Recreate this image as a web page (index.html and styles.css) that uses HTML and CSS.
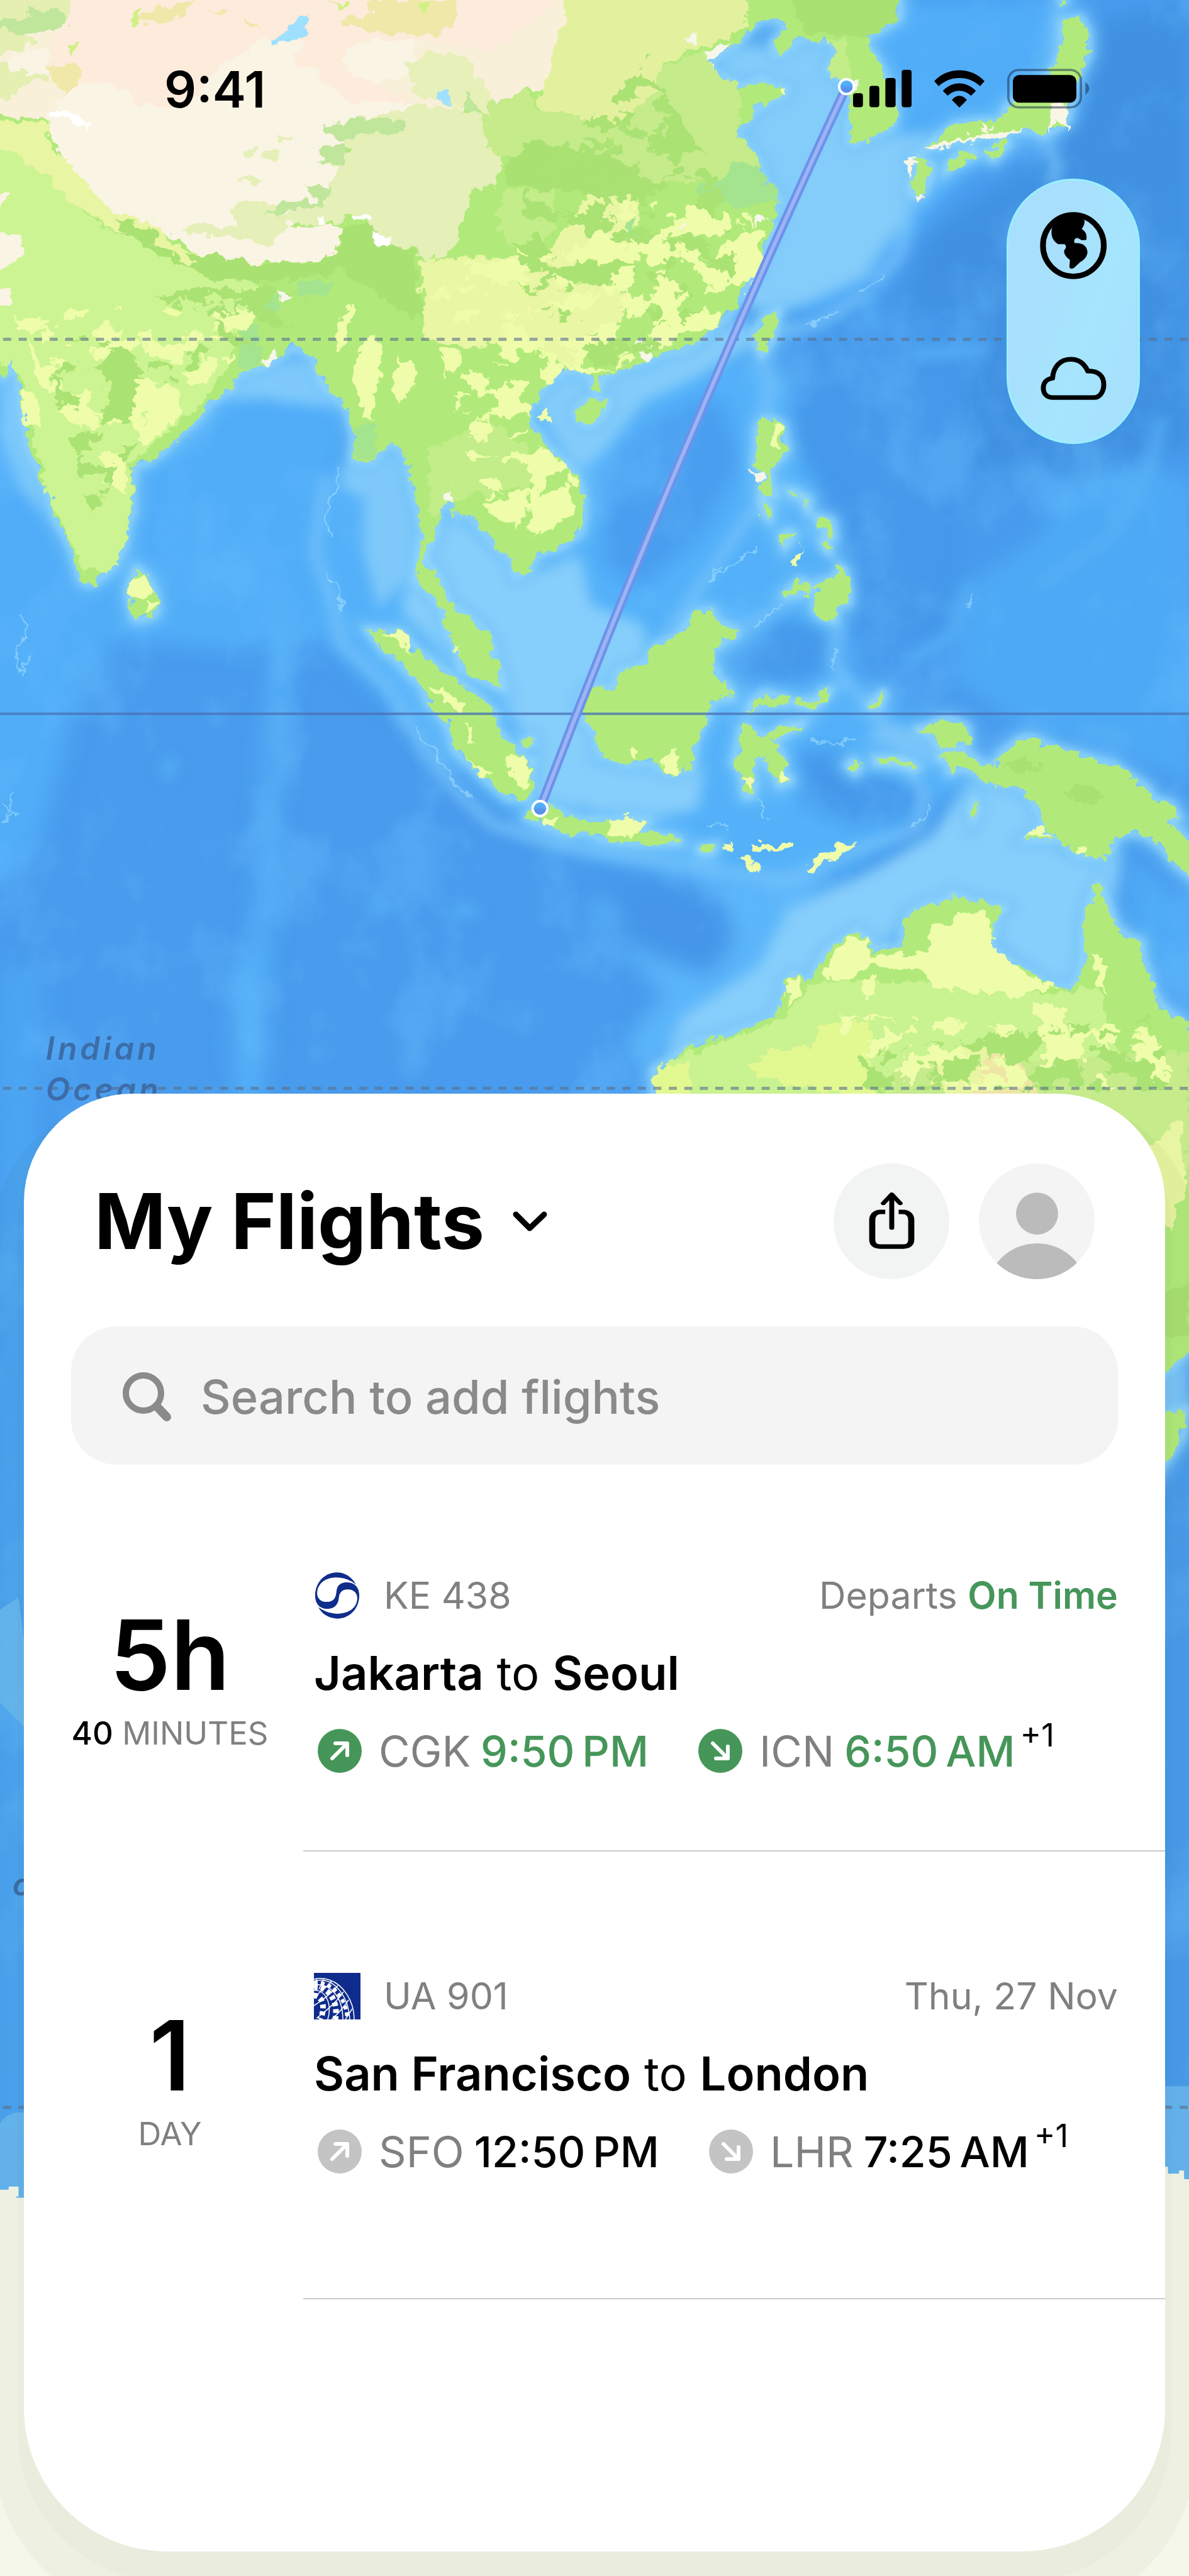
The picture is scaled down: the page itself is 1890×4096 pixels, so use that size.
FILE: index.html
```html
<!DOCTYPE html>
<html lang="en">

<head>
  <meta charset="UTF-8">
  <meta name="viewport" content="width=device-width, initial-scale=1.0">
  <title>My Flights</title>
  <link rel="stylesheet" href="styles.css">
</head>

<body>
  <svg class="map" viewBox="0 0 1920 4162" preserveAspectRatio="xMidYMin slice" aria-hidden="true">
    <defs>
      <filter id="soft" x="-10%" y="-10%" width="120%" height="120%">
        <feGaussianBlur stdDeviation="10" />
      </filter>
      <filter id="softer" x="-10%" y="-10%" width="120%" height="120%">
        <feGaussianBlur stdDeviation="18" />
      </filter>
      <filter id="haze" x="-20%" y="-20%" width="140%" height="140%">
        <feGaussianBlur stdDeviation="28" />
      </filter>
      <filter id="rough" filterUnits="userSpaceOnUse" x="0" y="0" width="1920" height="2500" color-interpolation-filters="sRGB">
        <feTurbulence type="fractalNoise" baseFrequency="0.05" numOctaves="3" seed="4" />
        <feDisplacementMap in="SourceGraphic" scale="26" xChannelSelector="R" yChannelSelector="G" />
      </filter>
      <!-- blotches of vegetation -->
      <filter id="speckYellow" filterUnits="userSpaceOnUse" x="0" y="0" width="1920" height="2500" color-interpolation-filters="sRGB">
        <feTurbulence type="fractalNoise" baseFrequency="0.02 0.026" numOctaves="4" seed="11" />
        <feColorMatrix values="0 0 0 0 .937  0 0 0 0 .992  0 0 0 0 .671  60 0 0 0 -33" />
        <feComposite in2="SourceAlpha" operator="in" />
      </filter>
      <filter id="speckGreen" filterUnits="userSpaceOnUse" x="0" y="0" width="1920" height="2500" color-interpolation-filters="sRGB">
        <feTurbulence type="fractalNoise" baseFrequency="0.018 0.024" numOctaves="4" seed="27" />
        <feColorMatrix values="0 0 0 0 .667  0 0 0 0 .886  0 0 0 0 .455  60 0 0 0 -32" />
        <feComposite in2="SourceAlpha" operator="in" />
      </filter>
      <!-- sea floor relief -->
      <filter id="relief" filterUnits="userSpaceOnUse" x="0" y="0" width="1920" height="3600" color-interpolation-filters="sRGB">
        <feTurbulence type="fractalNoise" baseFrequency="0.008 0.006" numOctaves="5" seed="8" />
        <feColorMatrix values="0 0 0 0 .42  0 0 0 0 .76  0 0 0 0 1  3.5 0 0 0 -1.7" />
      </filter>
      <linearGradient id="pin" x1="0" y1="0" x2="0" y2="1">
        <stop offset="0.35" stop-color="#52aff8" />
        <stop offset="0.65" stop-color="#5890ea" />
      </linearGradient>
      <g id="land">
        <path d="M-30,-30 L2370,-30 2372,50 2330,80 2290,105 2283,130 2310,160 2325,195 2338,225 2355,260 2362,320 2355,355 2325,372 2300,385 2265,395 2255,405 2240,395 2242,340 2250,320 2245,290 2250,250 2235,225 2205,215 2183,195 2195,175 2205,160 2200,120 2160,112 2120,105 2085,130 2060,150 2045,150 2040,120 2075,80 2065,60 2030,48 2000,60 1970,90 1950,120 1930,130 1905,145 1885,165 1870,180 1890,205 1935,230 1950,250 1985,235 2010,225 2035,240 2075,250 2060,270 2030,285 1990,310 1960,350 1940,380 1965,400 1985,430 2005,460 2015,500 2040,540 2055,560 2045,600 2025,610 2045,640 2035,660 2020,690 2005,730 1995,770 1970,795 1960,820 1940,860 1920,890 1880,920 1840,960 1800,985 1750,995 1700,1020 1630,1040 1588,1060 1580,1095 1568,1095 1560,1065 1540,1045 1500,1040 1450,1070 1420,1110 1395,1150 1395,1190 1420,1220 1440,1250 1475,1290 1500,1310 1525,1350 1538,1400 1540,1450 1530,1500 1480,1540 1420,1560 1400,1600 1362,1620 1350,1570 1310,1540 1270,1490 1240,1450 1200,1448 1195,1415 1165,1420 1155,1460 1150,1500 1130,1540 1120,1580 1150,1610 1170,1660 1185,1700 1240,1740 1280,1780 1300,1820 1298,1850 1320,1900 1327,1938 1300,1925 1250,1900 1215,1880 1205,1820 1180,1780 1170,1720 1130,1660 1095,1635 1105,1560 1115,1500 1100,1430 1080,1340 1070,1280 1035,1245 1010,1265 980,1300 930,1295 935,1230 920,1160 900,1130 850,1080 835,1040 828,1000 800,990 778,970 760,990 730,1010 700,1030 650,1045 620,1060 615,1095 570,1120 545,1140 520,1180 470,1225 430,1270 390,1300 355,1310 350,1370 350,1440 335,1480 330,1530 300,1595 260,1630 240,1645 215,1635 205,1600 195,1560 175,1510 145,1460 130,1390 100,1320 75,1260 65,1200 55,1140 50,1070 35,1012 20,1035 15,1060 -30,1060Z" />
        <path d="M360,1600 385,1620 405,1660 415,1700 410,1730 380,1742 355,1742 345,1700 338,1660Z" />
        <path d="M970,1773 1060,1778 1090,1820 1150,1870 1200,1910 1250,1950 1310,2010 1300,2040 1350,2100 1370,2125 1405,2140 1400,2180 1400,2220 1390,2250 1340,2245 1290,2200 1240,2150 1200,2110 1190,2060 1160,2010 1130,1980 1115,1930 1075,1890 1040,1850 1015,1835Z" />
        <path d="M1380,2085 1405,2078 1405,2092 1382,2100Z" />
        <path d="M1390,2300 1410,2275 1450,2270 1500,2295 1540,2310 1568,2305 1610,2310 1665,2300 1710,2310 1680,2340 1740,2350 1790,2360 1795,2372 1700,2375 1650,2370 1590,2362 1540,2340 1500,2345 1440,2325Z" />
        <path d="M1843,2388 1886,2380 1880,2398 1850,2400Z" />
        <path d="M1540,1950 1568,1935 1620,1938 1635,1890 1700,1870 1730,1815 1790,1790 1830,1730 1850,1718 1880,1718 1885,1745 1945,1775 1940,1790 1905,1800 1905,1815 1875,1825 1875,1860 1890,1890 1895,1910 1925,1935 1930,1965 1885,1970 1870,2005 1850,2050 1835,2080 1825,2160 1760,2175 1720,2145 1650,2150 1610,2135 1580,2125 1572,2060 1545,2030 1535,1985Z" />
        <path d="M1975,2000 1985,1975 2015,1950 2080,1965 2080,1980 2000,1990Z M2100,1975 2155,1970 2170,1945 2190,1942 2170,1975 2145,1993 2105,1985Z" />
        <path d="M1955,2050 1970,2040 1995,2060 2020,2075 2060,2045 2118,2035 2110,2048 2070,2065 2040,2090 2055,2110 2068,2140 2065,2180 2085,2190 2085,2200 2055,2210 2045,2180 2020,2150 2020,2130 1990,2130 1985,2170 1990,2200 1985,2240 1965,2240 1960,2200 1955,2175 1935,2145 1945,2110Z" />
        <path d="M2292,1983 2320,1960 2335,1940 2330,1960 2320,1990 2295,1990Z M2235,2155 2250,2140 2268,2160 2255,2175Z M2308,2133 2380,2135 2420,2160 2410,2168 2370,2152 2310,2148Z" />
        <path d="M2412,2050 2440,2050 2480,2025 2510,2025 2550,2045 2555,2090 2520,2100 2470,2100 2460,2070Z" />
        <path d="M2475,2130 2485,2122 2540,2115 2570,2130 2590,2155 2625,2152 2640,2125 2690,2080 2720,2075 2780,2105 2850,2125 2940,2155 2990,2190 3030,2220 3035,2245 3090,2265 3110,2300 3080,2305 3100,2330 3160,2390 3160,2480 3100,2430 3070,2390 3030,2355 2980,2340 2940,2360 2930,2395 2900,2410 2840,2405 2800,2370 2760,2330 2735,2270 2700,2220 2650,2210 2600,2195 2570,2175 2540,2160 2505,2175 2500,2150Z" />
        <path d="M2560,2280 2570,2252 2580,2275 2565,2305Z M2710,2360 2750,2325 2785,2362Z" />
        <path d="M1998,1200 2015,1180 2040,1180 2065,1200 2068,1240 2078,1260 2060,1290 2035,1310 2030,1345 2045,1395 2015,1395 2005,1370 2020,1345 1990,1310 1995,1270Z M2008,1410 2035,1430 2030,1462 2015,1445Z M2110,1395 2135,1405 2130,1435Z M2080,1380 2098,1384 2090,1394Z M2155,1455 2195,1465 2200,1510 2180,1500 2160,1475Z M2165,1520 2185,1520 2188,1555 2175,1545Z M2060,1510 2080,1495 2095,1505 2070,1540Z" />
        <path d="M2138,1653 2168,1638 2208,1623 2213,1593 2228,1603 2240,1663 2238,1698 2218,1693 2203,1723 2203,1748 2168,1738 2148,1718 2153,1673Z M2068,1675 2108,1633 2128,1643 2128,1668 2073,1678Z" />
        <path d="M1988,940 2018,890 2053,875 2040,950 2010,1000 1996,970Z" />
        <path d="M1515,1160 1545,1130 1568,1120 1605,1130 1585,1175 1560,1195 1530,1190Z" />
        <path d="M2800,60 2850,50 2870,90 2872,150 2850,200 2830,240 2825,290 2815,340 2790,360 2750,380 2720,365 2660,370 2620,380 2560,395 2500,405 2440,420 2470,390 2520,350 2600,340 2640,340 2655,300 2700,270 2740,240 2780,190 2800,140Z M2795,-20 2812,-20 2805,14Z" />
        <path d="M2495,470 2520,440 2570,420 2575,438 2520,465 2495,485Z M2600,430 2650,395 2662,405 2620,450Z M2415,445 2460,465 2450,510 2430,550 2405,550 2400,520 2420,480Z" />
        <path d="M1718,3140 1728,3060 1725,3010 1760,2990 1810,2950 1850,2930 1910,2920 1950,2900 2000,2885 2040,2870 2060,2830 2075,2790 2075,2760 2100,2745 2130,2770 2160,2720 2180,2680 2220,2650 2260,2620 2295,2650 2305,2675 2330,2665 2375,2670 2385,2610 2400,2570 2450,2545 2500,2535 2510,2515 2570,2540 2630,2550 2650,2555 2620,2590 2620,2630 2610,2660 2660,2700 2720,2740 2770,2775 2820,2785 2850,2750 2860,2690 2860,2630 2870,2560 2890,2500 2898,2485 2915,2530 2930,2570 2945,2610 2980,2640 3010,2650 3015,2700 3030,2740 3045,2800 3070,2840 3110,2870 3170,2920 3170,3770 3060,3870 2600,3600Z" />
        <path d="M3040,3990 3128,3965 3120,4040 3060,4135Z" />
      </g>
      <mask id="landMask" maskUnits="userSpaceOnUse" x="-30" y="-30" width="3200" height="4300">
        <use href="#land" fill="#fff" />
      </mask>
    </defs>

    <rect width="1920" height="4162" fill="#489bed" />

    <!-- sea depths -->
    <g transform="scale(.6122 .574)">
      <g filter="url(#haze)">
        <path fill="#51adf8" d="M-50,1000 H950 L860,1500 880,1800 600,1830 300,1800 200,1980 110,2350 0,2500 -50,2500Z" />
        <path fill="#53b0f9" d="M1500,1050 1900,950 2100,1100 2150,1400 2250,1900 2450,2050 2550,2200 2250,2450 1900,2480 1500,2400 1200,2150 1000,1950 850,1800 850,1350Z" />
        <path fill="#51adf8" d="M2300,0 2850,0 2750,300 2500,550 2300,800 2150,900 2000,800Z" />
        <path fill="#4ea9f5" d="M2500,1900 2550,1650 2750,1500 2800,1250 3150,1350 3150,2200 2700,2050Z" />
        <path fill="#4191e2" d="M2450,650 2700,480 2830,350 2900,60 3150,0 3150,1250 2850,1350 2500,1300 2300,1050Z" />
        <path fill="#4598ea" d="M2100,1000 2300,850 2550,900 2550,1500 2500,1800 2300,1800 2200,1400 2080,1250Z" />
        <path fill="#489eef" d="M1580,1350 1700,1180 1900,1120 1960,1300 1850,1500 1700,1650 1600,1600Z" />
        <path fill="#5cb6fa" d="M1550,2550 2200,2400 2100,2750 1900,2850 1700,3000 1640,2950 1750,2800Z" />
        <path fill="#4496e9" d="M1590,2460 1900,2500 1940,2650 1870,2750 1740,2700 1640,2650Z" />
        <path fill="#4598ea" d="M1900,1850 2050,1740 2190,1760 2180,1900 2050,1930 1910,1930Z M2100,2110 2230,2120 2280,2170 2450,2220 2400,2300 2250,2320 2120,2260Z" />
        <path fill="#4fabf6" d="M2970,2400 3150,2550 3150,2830 3050,2750 2980,2620Z" />
        <path fill="#4ba5f3" d="M0,2700 120,2750 100,3100 100,6000 -20,6000Z" />
        <path fill="#54b0f8" d="M720,1800 790,1750 750,2000 730,2300 710,2700 690,3100 620,3100 610,2750 670,2650 690,2300 700,2000Z" />
      </g>
    </g>
    <rect width="1920" height="3600" filter="url(#relief)" opacity=".35" />

    <!-- shelves -->
    <g transform="scale(.6122 .574)">
      <g filter="url(#softer)">
        <path fill="#86cefb" d="M1080,1560 1180,1440 1400,1620 1530,1560 1560,1700 1700,1760 1700,1900 1620,1950 1560,2150 1860,2160 1840,2280 1700,2300 1420,2250 1400,2100 1320,1960 1180,1850 1060,1720Z" />
        <path fill="#84ccfa" d="M1400,1120 1500,1040 1700,1040 1960,900 2000,960 1840,1060 1700,1130 1600,1260 1530,1330Z" />
        <path fill="#84ccfa" d="M1890,140 2200,110 2260,400 2450,370 2430,560 2330,700 2280,780 2160,840 2060,880 1960,860 2040,560 1960,380Z" />
        <path fill="#86cefb" d="M2560,2190 2740,2250 2800,2400 2960,2380 2950,2480 2910,2800 2780,2790 2620,2640 2400,2560 2300,2700 2100,2760 2050,2880 1740,2990 1800,2860 2000,2720 2080,2560 2300,2450 2460,2350Z" />
        <path fill="#7fc9fa" d="M900,1310 1060,1270 1110,1600 1060,1640 1000,1720 960,1560 960,1400 900,1380Z" />
        <path fill="#80cafb" d="M0,1060 50,1060 110,1350 140,1480 60,1380 0,1220Z M640,1060 820,1010 900,1150 700,1120 600,1130Z" />
        <path fill="#7ac4f9" d="M2330,2030 2450,2060 2480,2160 2380,2110 2280,2080Z M3000,3780 3136,3780 3136,4000 3000,3990Z" />
        <use href="#land" fill="none" stroke="#74c5fb" stroke-width="50" opacity=".8" />
        <g fill="none" stroke="#74c2fa" stroke-width="26">
          <path d="M860,1340 830,1550 880,1700 900,1810 1020,1930 1100,2070 1200,2220 1300,2320 1440,2370 1640,2410 1850,2440 2080,2480 2260,2390 2420,2330 2440,2230 2380,2150" />
          <path d="M2410,560 2370,720 2290,820 2160,910 2050,940" />
          <path d="M2000,1010 2040,1080 2000,1200 M2010,1400 1880,1600 1760,1780 M2130,1660 1930,1790 M2210,1750 2200,1870 2330,2040" />
          <path d="M2790,0 2770,160 M2750,380 2790,470 2770,520" />
        </g>
        <g fill="none" stroke="#56b0f6" stroke-width="28">
          <path d="M2300,770 2290,920 M2400,1000 2600,980 M2990,1350 2940,1500 2740,1650 M2560,1640 2520,1780 2400,1860 M3060,1180 3040,1300 2970,1460" />
          <path d="M2540,150 2590,90 2640,110" />
          <path d="M740,1680 770,1800 M900,1500 930,1440 M450,2130 440,2190 M990,2560 1030,2540 M1200,2560 1260,2570 M2850,2050 2980,2080" />
        </g>
      </g>
      <use href="#land" fill="none" stroke="#9ddcfd" stroke-width="18" opacity=".8" filter="url(#soft)" />
    </g>

    <!-- bright reef lines -->
    <g filter="url(#rough)">
      <g transform="scale(.6122 .574)" fill="none" stroke="#a6e2ff" stroke-width="5" opacity=".55">
        <path d="M900,1330 860,1450 870,1500 M860,1600 890,1660 905,1720 M1090,2050 1115,2080 1150,2120 1200,2200 1245,2240 M45,1720 70,1770 45,1850 60,1900 75,1840 M10,2270 40,2280 15,2310 35,2230" />
        <path d="M2120,920 2210,880 M2270,830 2310,795 2320,770 M2140,2090 2220,2090 2260,2080 M2000,2250 2020,2310 M1920,2330 1860,2320 M1900,1590 1870,1640 1900,1610 2000,1540 M2570,1670 2550,1710 M1980,1770 2060,1700 M2200,1830 2200,1880 M2410,2330 2440,2300 2450,2260" />
      </g>
    </g>

    <!-- land -->
    <g filter="url(#rough)">
      <g transform="scale(.6122 .574)">
        <use href="#land" fill="#b1ea7b" />
        <g mask="url(#landMask)">
          <path fill="#cdf492" d="M-30,400 100,470 220,600 420,710 560,780 680,800 660,880 620,960 600,1030 540,1130 350,1300 340,1640 220,1600 130,1400 90,1250 60,1060 -30,1000Z" />
          <path fill="#e9f6a4" d="M1110,730 1440,720 1568,520 1700,500 1640,900 1500,1040 1400,950 1250,980 1120,950Z" />
          <path fill="#e3f19f" d="M1400,-20 1980,-20 1960,90 1850,130 1750,180 1740,260 1640,360 1500,400 1420,300 1430,60Z" />
          <path fill="#c5eb8b" d="M1740,190 1890,130 1950,260 1950,380 2010,470 1930,500 1640,530 1568,440 1280,440 1270,270 1400,260 1420,310 1640,350 1740,250Z" />
          <path fill="#a9e173" d="M1400,390 1568,430 1700,470 1640,560 1480,540 1330,520 1330,470Z M2080,-20 2390,-20 2370,70 2290,110 2250,100 2130,90Z" />
          <path fill="#c2ed89" d="M1340,540 1460,530 1460,640 1430,690 1360,700 1310,640 1310,580Z M1130,1260 1300,1190 1420,1290 1400,1370 1200,1400 1140,1450Z M2190,110 2240,110 2240,225 2180,215Z" />
          <path fill="#a4e48f" d="M1930,460 2000,460 2060,560 1980,580 1850,570 1830,530 1900,500Z M670,840 740,840 730,930 690,900Z M640,930 680,910 690,1030 640,1040Z M930,1200 990,1190 990,1290 930,1290Z M780,790 880,790 870,825 790,830Z M1660,600 1700,660 1650,690Z" />
          <path fill="#f9f0da" d="M-30,-20 1500,-20 1440,240 1160,330 130,340 -30,310Z" />
          <path fill="#fdebdc" d="M120,-20 1500,-20 1360,100 1330,150 1260,150 1150,110 1100,120 950,110 900,180 1100,290 900,330 480,330 270,260 140,240Z" />
          <path fill="#f9f0da" d="M-30,-20 180,-20 130,180 160,280 130,330 -30,310Z M1130,150 1250,130 1300,150 1370,90 1430,60 1430,235 1330,248 1270,210Z" />
          <path fill="#e4efb1" d="M-30,-20 180,-20 180,70 60,90 100,120 -30,170Z M-30,170 110,180 130,220 60,240 20,290 -30,250Z M190,250 270,255 240,340 130,350Z" />
          <path fill="#bfe69a" d="M60,20 160,30 180,70 90,90 -30,90 -30,60 80,50Z" />
          <path fill="#faf4e4" d="M130,320 210,230 290,230 360,295 500,300 570,190 640,150 700,110 790,120 780,180 850,215 920,290 1080,290 1160,320 1000,380 900,420 900,500 860,560 760,640 900,640 880,710 840,750 800,735 660,742 520,710 430,645 290,600 230,520 170,450 130,370Z" />
          <path fill="#faf4e4" d="M920,120 1090,110 1090,180 1060,230 960,230 910,190Z M20,150 120,140 130,210 30,200Z M-30,650 50,660 65,710 -30,790Z M-30,540 20,540 15,580 -30,600Z M-30,820 35,815 25,850 -30,860Z" />
          <path fill="#e8f0ba" d="M1070,180 1130,140 1230,160 1280,240 1300,330 1210,300 1100,270Z" />
          <path fill="#e5efb8" d="M870,370 960,330 1100,300 1200,300 1270,330 1290,420 1330,440 1310,520 1240,530 1220,640 1180,720 1120,730 1090,700 1040,700 980,640 930,600 860,640 790,630 730,610 860,560 870,510 900,480 860,470 930,420Z" />
          <path fill="#e5efb8" d="M640,430 680,415 670,450Z M700,425 740,420 730,455 695,445Z M725,375 770,395 740,405Z M630,515 660,490 690,515Z M600,590 640,565 740,580 760,640 720,690 480,650 500,630 640,640Z" />
          <path fill="#bfe69a" d="M850,355 990,330 1060,345 1055,372 940,375 900,400Z M845,410 915,405 905,470 850,465Z M800,525 880,520 850,570 740,600 710,610 740,570 830,560Z M1220,260 1260,290 1255,330 1225,300Z" />
          <path fill="#efe8a8" d="M130,180 200,175 215,240 170,270 130,210Z M900,50 980,40 970,0 1210,0 1200,50 1150,105 1010,90 900,75Z M350,60 430,15 520,15 480,45 400,70Z M550,30 610,25 590,45Z M640,50 690,80 660,80Z M270,55 310,50Z" />
          <path fill="#cff184" d="M170,130 210,125 190,150Z M350,30 370,25 365,75 345,70Z M870,10 920,5 900,20Z M1090,20 1140,5 1130,40Z" />
          <path fill="#a9e173" d="M300,620 400,650 430,690 560,740 680,750 740,735 830,745 890,700 900,640 980,630 1020,680 1090,710 1120,900 1060,880 1000,830 900,760 700,800 560,780 420,720 330,660Z" />
          <path fill="#e8f5a2" d="M-30,330 130,350 130,400 180,460 290,590 430,640 470,700 560,720 500,750 430,700 300,640 200,580 120,490 -30,400Z" />
          <path fill="#a9e173" d="M300,615 360,630 420,650 410,690 340,660Z M490,715 570,715 680,745 660,790 540,760Z" />
          <path fill="#fff" d="M137,308 200,322 240,350 235,365 180,345 140,325Z M840,612 862,615 858,635 838,635Z M935,605 985,605 985,620 940,618Z M980,650 1035,675 1030,688 990,685Z" />
          <path fill="#f6f6ea" d="M695,1010 730,985 725,1030 695,1030Z M1165,1390 1195,1375 1195,1412 1170,1410Z M730,820 768,825 745,845Z M1860,145 1930,110 1900,170 1920,215 1880,200Z M1810,100 1840,95 1830,122Z M1680,965 1720,960 1720,1010 1700,1020Z M1780,630 1830,640 1810,655Z M1650,680 1700,690 1690,705Z M1990,610 2020,605 2015,628 1990,628Z M2235,215 2265,220 2255,260Z" />
          <path fill="#effdab" d="M960,950 1000,940 1005,1090 985,1110 985,1180 960,1180 930,1040Z M1050,1000 1095,1040 1095,1080 1050,1150 1030,1090Z M920,860 932,860 905,990 885,990 890,930Z M570,890 680,870 650,930 560,930Z M370,1090 470,1090 480,1170 380,1260 390,1160 340,1170Z M55,1090 110,1130 100,1200 60,1210Z M70,950 110,1030 130,1080 90,1060Z M300,1290 340,1280 330,1390 270,1350Z M1280,1420 1400,1370 1370,1480 1290,1450Z M1410,1400 1500,1360 1510,1440 1430,1500Z M40,890 130,900 110,930 50,930Z M1570,650 1650,700 1670,800 1600,830 1568,750Z M1900,700 1960,650 2020,650 1990,740 1950,790 1860,830Z" />
          <path fill="#effdab" d="M1135,1940 1175,1940 1225,1990 1215,2005 1170,1970Z M1228,2040 1250,2040 1245,2095 1235,2090Z M1335,2130 1400,2130 1395,2200 1370,2215 1340,2170Z M1235,2140 1300,2175 1280,2190Z M1015,1780 1070,1780 1100,1850 1070,1810Z M1190,1810 1212,1820 1205,1850Z M340,1650 370,1610 405,1660 390,1680 340,1690Z M385,1690 412,1690 395,1735Z M1620,2300 1710,2300 1700,2320 1670,2355 1610,2350Z M1430,2300 1480,2300 1460,2330 1430,2330Z M1665,2095 1690,2110 1680,2145 1665,2140Z M1740,2140 1785,2110 1785,2180 1760,2170Z M2050,2180 2090,2180 2070,2220Z M1955,2195 1990,2195 1980,2230Z M2035,1190 2060,1200 2050,1270 2040,1270Z" />
          <path fill="#c9f290" d="M1700,3100 1740,2990 2050,2880 2150,2760 2400,2760 2700,2800 2900,2780 3000,3100Z" />
          <path fill="#c5eb8b" d="M2360,3010 2700,2980 3136,2960 3136,3300 2360,3200Z" />
          <path fill="#e2f891" d="M1970,3000 2040,2950 2140,2950 2160,2880 2290,2880 2300,3100 2000,3030Z M1730,3000 1810,2990 1820,3100 1720,3100Z" />
          <path fill="#effdab" d="M2240,2640 2290,2640 2300,2690 2450,2680 2460,2590 2500,2600 2540,2560 2600,2560 2620,2640 2700,2740 2780,2780 2700,2800 2580,2790 2460,2780 2430,2730 2300,2720 2240,2760 2170,2750 2200,2690Z M2075,2770 2100,2750 2110,2800 2080,2830Z M2270,2760 2315,2750 2285,2820Z M2720,2830 2800,2820 2830,2950 2830,3000 2770,2970Z M2980,2940 3060,2940 3080,3060 3040,3070Z M2885,2680 2910,2700 2920,2790 2890,2770Z M2480,2880 2550,2880 2500,2920Z" />
          <path fill="#efe6a6" d="M2600,2960 2640,2940 2700,3000 2740,3100 2560,3100Z" />
          <path fill="#e8f5a2" d="M2470,2990 2530,2940 2610,2950 2570,3100 2450,3050Z M3020,3250 3110,3150 3130,3300 3090,3460 3040,3400Z" />
          <path fill="#a9e173" d="M2640,2160 2700,2135 2750,2160 2700,2180Z M2800,2230 2850,2210 2920,2240 2860,2270Z M3060,3660 3136,3600 3136,3760 3060,3760Z" />
        </g>
        <path fill="#9fe0ff" d="M712,124 760,80 790,40 818,50 805,95 770,122Z M1150,255 1185,258 1190,290 1165,285Z M1810,660 1840,680 1835,715 1818,700Z" />
        <path fill="#f8f6e4" d="M2380,455 2420,440 2400,495Z M2440,415 2520,395 2600,375 2700,365 2640,395 2560,395 2460,425Z M2765,290 2822,290 2815,370 2790,330 2770,380Z M2590,345 2605,350 2605,375Z M2410,550 2440,555 2425,568Z M1980,1330 2010,1330 2008,1358 1985,1350Z" />
        <path fill="#effdab" d="M1896,2365 1930,2370 1930,2393 1905,2390Z M1976,2375 2098,2375 2080,2390 1980,2393Z M1948,2415 1975,2415 2010,2450 1995,2455Z M2123,2445 2165,2405 2208,2378 2268,2370 2215,2405 2165,2435 2138,2458Z M2085,1590 2110,1535 2105,1585Z M2050,250 2082,248 2065,268Z M2710,2350 2745,2325 2780,2355Z M2840,2380 2865,2375 2865,2405 2840,2405Z" />
      </g>
      <path filter="url(#speckGreen)" d="M1080,60 1120,60 1060,130 1170,300 1190,440 1080,560 960,590 820,440 850,300Z" />
      <path filter="url(#speckYellow)" d="M1000,320 1210,340 1240,440 1150,530 980,600 870,620 690,480 760,420 820,400 900,420Z M710,560 860,600 930,780 860,870 800,820 720,680Z M60,500 400,500 380,580 230,720 190,780 130,700 70,640Z M1350,1640 1850,1660 1910,1760 1400,1760Z" />
      <path filter="url(#speckGreen)" d="M60,540 340,560 220,720 150,830Z M1380,1700 1860,1640 1900,1760 1400,1760Z M240,470 500,460 480,540 380,560Z" />
    </g>

    <!-- polar ice -->
    <path fill="#6bbaf2" opacity=".8" d="M0,3430 Q20,3400 60,3420 V3560 H0Z M1860,3370 H1920 V3540 H1860Z M0,2600 30,2580 45,2700 40,2790 0,2750Z" />
    <path fill="#f5f7ea" d="M0,3537 H14 V3532 H30 V3548 H26 V3550 H960 L1870,3500 H1886 V3511 H1904 V3506 H1912 V3520 H1920 V4162 H0Z" />

    <g class="graticule">
      <path d="M0,1153 H1920" />
      <path class="dashed" d="M-20,548 H1920 M-20,1758 H1920 M-20,3404 H1920" />
    </g>
    <text class="sea-label" x="74" y="1712">Indian</text>
    <text class="sea-label" x="74" y="1778">Ocean</text>
    <text class="sea-label" x="20" y="3062">c</text>

    <!-- route -->
    <path class="route-edge" d="M1367,140 Q1096,720 872,1306" />
    <path class="route-line" d="M1367,140 Q1096,720 872,1306" />
    <circle class="pin" cx="1367" cy="140" r="12" />
    <circle class="pin" cx="872" cy="1306" r="12" />
  </svg>

  <div class="screen">
    <div class="map-area">
      <div class="status-bar">
        <span class="clock">9:41</span>
        <div class="status-icons">
          <svg width="93" height="60" viewBox="682 195 154 106" preserveAspectRatio="none" aria-hidden="true">
            <rect x="682" y="261" width="26" height="39" rx="7" />
            <rect x="725" y="240" width="26" height="60" rx="7" />
            <rect x="767" y="218" width="27" height="82" rx="7" />
            <rect x="810" y="195" width="26" height="105" rx="7" />
          </svg>
          <svg width="80" height="60" viewBox="896 195 134 106" preserveAspectRatio="none" aria-hidden="true">
            <path d="M896,227 C931,186 995,186 1030,227 L1018,241 C989,210 937,210 908,241Z M919,254 C944,226 981,226 1007,254 L994,268 C975,249 950,249 932,268Z M943,280 C955,264 971,264 983,280 L963,301Z" />
          </svg>
          <svg width="131" height="64" viewBox="1090 195 218 112" preserveAspectRatio="none" aria-hidden="true">
            <rect class="battery-case" x="1093" y="199" width="192" height="104" rx="28" />
            <rect x="1105" y="213" width="168" height="77" rx="17" />
            <path class="battery-tip" d="M1297,233 Q1307,241 1307,250 T1297,268Z" />
          </svg>
        </div>
      </div>
      <div class="map-controls">
        <button type="button" aria-label="Globe view">
          <svg width="107" height="107" viewBox="1174 595 177 188" preserveAspectRatio="none" aria-hidden="true">
            <ellipse class="ring" cx="1262" cy="689" rx="80" ry="86" />
            <path d="M1205,645 C1213,610 1250,590 1291,617 C1293,628 1288,636 1284,643 C1296,650 1298,662 1296,673 L1284,674 1274,668 C1265,668 1263,673 1265,682 C1290,680 1300,694 1299,710 C1296,724 1288,730 1280,735 L1263,752 C1254,757 1250,750 1252,743 L1253,729 C1240,720 1236,708 1238,702 C1245,694 1243,690 1239,685 L1222,685 C1206,674 1203,660 1205,645Z" />
          </svg>
        </button>
        <button type="button" aria-label="Weather layer">
          <svg width="107" height="74" viewBox="1174 1000 176 130" preserveAspectRatio="none" aria-hidden="true">
            <path class="cloud" d="M1208,1118 H1315 C1332,1118 1341,1100 1341,1081 C1341,1057 1325,1042 1299,1044 C1290,1022 1275,1011 1254,1011 C1226,1011 1209,1034 1207,1064 C1190,1066 1183,1078 1183,1092 C1183,1108 1193,1118 1208,1118Z" />
          </svg>
        </button>
      </div>
    </div>

    <main class="sheet">
      <header class="sheet-header">
        <button type="button" class="title-button">
          <h1>My Flights</h1>
          <svg width="55" height="34" viewBox="0 0 55 34" aria-hidden="true">
            <path class="chevron" d="M5,6 L27,28 L50,6" />
          </svg>
        </button>
        <div class="header-actions">
          <button type="button" class="round-button share" aria-label="Share">
            <svg width="73" height="91" viewBox="724 405 120 205" preserveAspectRatio="none" aria-hidden="true">
              <path class="share-box" d="M767,475 H756 C740,475 733,488 733,505 V572 C733,590 740,599 754,599 H814 C828,599 835,590 835,572 V505 C835,488 828,475 812,475 H802" />
              <path class="share-arrow" d="M784,414 V532 M762,444 L784,412 L806,444" />
            </svg>
          </button>
          <button type="button" class="round-button profile" aria-label="Profile">
            <svg width="184" height="184" viewBox="0 0 187 187" aria-hidden="true">
              <circle cx="94" cy="81" r="34" />
              <circle cx="94" cy="211" r="82" />
            </svg>
          </button>
        </div>
      </header>

      <label class="search">
        <svg width="78" height="78" viewBox="0 0 78 78" aria-hidden="true">
          <circle cx="33" cy="33" r="28" />
          <path d="M54,54 L70,71" />
        </svg>
        <input type="text" placeholder="Search to add flights" aria-label="Search to add flights">
      </label>

      <section class="flight">
        <div class="countdown">
          <div class="countdown-value">5h</div>
          <div class="countdown-unit"><b>40</b> MINUTES</div>
        </div>
        <div class="details">
          <div class="meta">
            <svg width="74" height="74" viewBox="798 235 116 198" preserveAspectRatio="none" aria-hidden="true">
              <path fill="#0f2d8b" d="M903,287 C890,250 872,236 856,236 C824,236 801,280 801,334 C801,368 812,391 832,391 C850,391 859,370 860,345 C861,322 868,308 882,308 C898,308 906,325 906,345 C906,380 890,408 862,411 C845,413 825,405 809,383 C818,415 838,432 856,432 C888,432 911,388 911,334 C911,300 900,278 880,278 C862,278 855,295 854,320 C852,347 846,361 830,361 C814,361 806,345 806,323 C806,290 822,260 850,257 C867,255 888,265 903,287Z" />
            </svg>
            <span>KE 438</span>
            <span class="state">Departs <b>On Time</b></span>
          </div>
          <h2><b>Jakarta</b> to <b>Seoul</b></h2>
          <div class="times on-time">
            <svg width="70" height="70" viewBox="0 0 70 70" aria-hidden="true">
              <circle cx="35" cy="35" r="35" />
              <path d="M23,47 L46,24 M28,23 H47 V42" />
            </svg>
            <span class="airport">CGK</span>
            <span class="time">9:50&#8201;PM</span>
            <svg class="arrive" width="70" height="70" viewBox="0 0 70 70" aria-hidden="true">
              <circle cx="35" cy="35" r="35" />
              <path d="M23,23 L46,46 M28,47 H47 V28" />
            </svg>
            <span class="airport">ICN</span>
            <span class="time">6:50&#8201;AM</span>
            <span class="next-day">+1</span>
          </div>
        </div>
      </section>

      <section class="flight later">
        <div class="countdown">
          <div class="countdown-value">1</div>
          <div class="countdown-unit">DAY</div>
        </div>
        <div class="details">
          <div class="meta">
            <svg width="74" height="74" viewBox="0 0 74 74" aria-hidden="true">
              <rect width="74" height="74" fill="#0f2c8c" />
              <g class="globe-grid">
                <path d="M0,10 Q12,7 24,11 C46,18 64,44 64,74" />
                <path d="M0,13 C32,4 55,38 57,74" />
                <path class="tiles" d="M0,16 C26,12 52,38 53,74" />
                <path d="M0,19 C24,16 46,36 46,74" />
                <path class="tiles wide" d="M0,23 C20,20 40,42 34,74" />
                <path d="M0,28 C16,26 30,46 22,74" />
                <path class="tiles wide" d="M0,36 C12,36 20,52 10,74" />
                <path d="M4,10 L2,24 M16,9 L8,26 M28,13 Q22,22 0,38 M38,20 Q28,34 0,52 M47,30 Q34,50 4,72 M55,43 Q44,60 28,74 M61,57 L50,74" />
              </g>
            </svg>
            <span>UA 901</span>
            <span class="state">Thu, 27 Nov</span>
          </div>
          <h2><b>San Francisco</b> to <b>London</b></h2>
          <div class="times">
            <svg width="70" height="70" viewBox="0 0 70 70" aria-hidden="true">
              <circle cx="35" cy="35" r="35" />
              <path d="M23,47 L46,24 M28,23 H47 V42" />
            </svg>
            <span class="airport">SFO</span>
            <span class="time">12:50&#8201;PM</span>
            <svg class="arrive" width="70" height="70" viewBox="0 0 70 70" aria-hidden="true">
              <circle cx="35" cy="35" r="35" />
              <path d="M23,23 L46,46 M28,47 H47 V28" />
            </svg>
            <span class="airport">LHR</span>
            <span class="time">7:25&#8201;AM</span>
            <span class="next-day">+1</span>
          </div>
        </div>
      </section>
    </main>
  </div>
</body>

</html>
```
FILE: styles.css
```css
* {
  box-sizing: border-box;
}

body {
  margin: 0;
  position: relative;
  overflow-x: hidden;
  background-color: #f5f7ea;
  color: #000;
  font-family: 'Inter', 'Liberation Sans', sans-serif;
}

button {
  border: 0;
  padding: 0;
  background: none;
  color: inherit;
  font-family: inherit;
  cursor: pointer;
}

svg {
  display: block;
  flex-shrink: 0;
}

h1,
h2 {
  margin: 0;
}

/* map behind everything */
.map {
  position: absolute;
  top: 0;
  left: 0;
  width: 100%;
  height: 100%;
}

.graticule path {
  fill: none;
  stroke: #4a72b4;
  stroke-width: 4;
  opacity: 0.75;
}

.graticule .dashed {
  stroke: #5a6f8c;
  stroke-width: 5;
  stroke-dasharray: 13 12;
  opacity: 0.6;
}

.sea-label {
  fill: #3c6da8;
  font-size: 51px;
  font-weight: 600;
  font-style: italic;
  letter-spacing: 5px;
}

.route-edge {
  fill: none;
  stroke: #6d92ea;
  stroke-width: 15;
}

.route-line {
  fill: none;
  stroke: #9bb4f4;
  stroke-width: 6;
}

.pin {
  fill: url(#pin);
  stroke: #fff;
  stroke-width: 4;
}

/* page */
.screen {
  position: relative;
  display: flex;
  flex-direction: column;
  min-height: 100vh;
  overflow: hidden;
}

.map-area {
  display: flex;
  flex-direction: column;
  height: 92vw;
  flex-shrink: 0;
}

.status-bar {
  display: flex;
  justify-content: space-between;
  align-items: center;
  padding: 91px 158px 0 261px;
  height: 191px;
}

.clock {
  font-size: 80px;
  font-weight: 600;
}

.status-icons {
  display: flex;
  align-items: center;
  gap: 36px;
}

.battery-case {
  fill: none;
  stroke: rgba(20, 40, 70, 0.5);
  stroke-width: 6;
}

.battery-tip {
  fill: rgba(20, 40, 70, 0.5);
}

.map-controls {
  display: flex;
  flex-direction: column;
  justify-content: space-between;
  align-items: center;
  align-self: flex-end;
  width: 212px;
  height: 422px;
  margin: 93px 78px 0 0;
  padding: 50px 0 64px;
  border: 3px solid #9befff;
  border-radius: 106px;
  background: linear-gradient(110deg, #a8dffc 30%, #a6e5fe 60%, #a6defb);
}

.ring {
  fill: none;
  stroke: #000;
  stroke-width: 15;
}

.cloud {
  fill: none;
  stroke: #000;
  stroke-width: 13;
  stroke-linejoin: round;
}

/* sheet */
.sheet {
  flex: 1;
  margin: 0 38px 39px;
  padding-top: 111px;
  border-radius: 172px 172px 228px 228px;
  background-color: #fff;
  box-shadow: 0 38px 0 10px rgba(40, 50, 0, 0.02), 0 60px 0 50px rgba(40, 50, 0, 0.03);
}

.sheet-header {
  display: flex;
  justify-content: space-between;
  align-items: center;
  padding: 0 112px;
}

.title-button {
  display: flex;
  align-items: center;
  gap: 45px;
}

.title-button h1 {
  font-size: 122px;
  line-height: 160px;
  font-weight: 700;
}

.chevron {
  fill: none;
  stroke: #000;
  stroke-width: 9;
  stroke-linecap: round;
  stroke-linejoin: round;
}

.header-actions {
  display: flex;
  gap: 47px;
}

.round-button {
  display: flex;
  justify-content: center;
  align-items: center;
  width: 184px;
  height: 184px;
  border-radius: 50%;
  overflow: hidden;
  background-color: #f4f4f4;
}

.share {
  background-color: #f1f4f3;
}

.share-box {
  fill: none;
  stroke: #000;
  stroke-width: 16;
}

.share-arrow {
  fill: none;
  stroke: #000;
  stroke-width: 13;
  stroke-linecap: round;
  stroke-linejoin: round;
}

.profile svg {
  fill: #bbb;
}

.search {
  display: flex;
  align-items: center;
  gap: 46px;
  height: 220px;
  margin: 75px 75px 0;
  padding: 4px 82px 0;
  border-radius: 72px;
  background-color: #f4f4f4;
}

.search svg {
  fill: none;
  stroke: #8a8a8a;
  stroke-width: 10;
  stroke-linecap: round;
}

.search path {
  stroke-width: 14;
}

.search input {
  flex: 1;
  min-width: 0;
  border: 0;
  padding: 0;
  outline: none;
  background: none;
  font-family: inherit;
  font-size: 74px;
  line-height: 92px;
}

.search input::placeholder {
  color: #8a8a8a;
  font-weight: 500;
  opacity: 1;
}

/* flights */
.flight {
  display: flex;
  gap: 55px;
  padding-left: 75px;
}

.countdown {
  display: flex;
  flex-direction: column;
  gap: 18px;
  width: 314px;
  padding-top: 225px;
  text-align: center;
  white-space: nowrap;
}

.countdown-value {
  font-size: 154px;
  line-height: 154px;
  font-weight: 600;
}

.countdown-unit {
  color: #808080;
  font-size: 51px;
  line-height: 60px;
}

.countdown-unit b {
  color: #000;
  font-weight: 500;
}

.details {
  flex: 1;
  padding: 171px 75px 112px 17px;
  border-bottom: 2px solid #ccc;
}

.later .details {
  padding-top: 193px;
  padding-bottom: 187px;
}

.later .countdown {
  padding-top: 247px;
}

.meta {
  display: flex;
  align-items: center;
  gap: 37px;
  height: 74px;
  color: #808080;
  font-size: 59px;
}

.state {
  margin-left: auto;
}

.state b {
  color: #469659;
  font-weight: 600;
}

.globe-grid {
  fill: none;
  stroke: #fff;
  stroke-width: 1.5;
}

.globe-grid .tiles {
  stroke-width: 6;
  stroke-dasharray: 6 5;
}

.globe-grid .wide {
  stroke-width: 9;
}

.details h2 {
  margin: 40px 0 32px;
  font-size: 74px;
  line-height: 92px;
  font-weight: 400;
  white-space: nowrap;
}

.details h2 b {
  font-weight: 600;
}

.times {
  display: flex;
  align-items: center;
  height: 92px;
  font-size: 68px;
  line-height: 92px;
  white-space: nowrap;
}

.times svg {
  margin: 0 27px 0 6px;
}

.times .arrive {
  margin-left: 79px;
}

.times circle {
  fill: #c4c4c4;
}

.times path {
  fill: none;
  stroke: #fff;
  stroke-width: 6;
  stroke-linecap: round;
  stroke-linejoin: round;
}

.on-time circle {
  fill: #469659;
}

.airport {
  margin-right: 16px;
  color: #808080;
}

.time {
  font-weight: 500;
}

.on-time .time {
  color: #469659;
}

.next-day {
  align-self: flex-start;
  margin-left: 8px;
  font-size: 51px;
  line-height: 42px;
}
```
